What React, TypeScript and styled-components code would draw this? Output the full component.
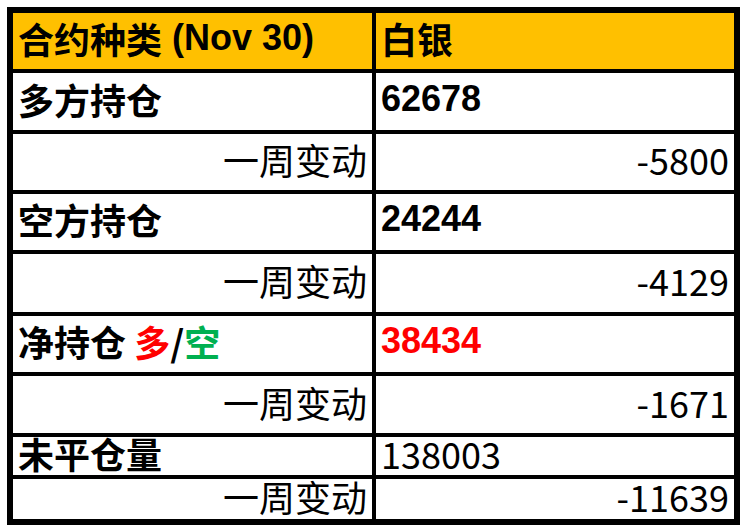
import React from "react";
import styled, { createGlobalStyle } from "styled-components";

const GlobalStyle = createGlobalStyle`
  html, body { margin: 0; padding: 0; background: #ffffff; }
  body { padding: 7px; }
`;

const Table = styled.div`
  display: grid;
  grid-template-columns: 359px 358px;
  grid-template-rows: 56px 57px 56px 56px 58px 56px 57px 38px 40px;
  gap: 4px;
  width: max-content;
  background: #000000;
  border: 6px solid #000000;
`;

const Cell = styled.div<{ $head?: boolean; $right?: boolean; $bold?: boolean; $latin?: boolean }>`
  display: flex;
  align-items: center;
  justify-content: ${(p) => (p.$right ? "flex-end" : "flex-start")};
  min-height: 0;
  background: ${(p) => (p.$head ? "#FFC000" : "#ffffff")};
  padding: 0 ${(p) => (p.$right ? "5px" : "0")} 6px ${(p) => (p.$right ? "0" : "5px")};
  font-family: ${(p) =>
    p.$latin
      ? '"Liberation Sans", Arial, "Noto Sans CJK SC", sans-serif'
      : '"Noto Sans CJK SC", "Liberation Sans", sans-serif'};
  font-weight: ${(p) => (p.$bold ? 700 : 400)};
  font-size: 36px;
  line-height: 1;
  color: #000000;
  white-space: nowrap;
`;

const Latin = styled.span`
  font-family: "Liberation Sans", Arial, sans-serif;
  font-weight: 700;
`;

const Tone = styled.span<{ $color: string }>`
  color: ${(p) => p.$color};
`;

export default function App() {
  return (
    <>
      <GlobalStyle />
      <Table>
        <Cell $head $bold>
          合约种类<Latin>&nbsp;(Nov 30)</Latin>
        </Cell>
        <Cell $head $bold>白银</Cell>

        <Cell $bold>多方持仓</Cell>
        <Cell $bold $latin>62678</Cell>
        <Cell $right>一周变动</Cell>
        <Cell $right>-5800</Cell>

        <Cell $bold>空方持仓</Cell>
        <Cell $bold $latin>24244</Cell>
        <Cell $right>一周变动</Cell>
        <Cell $right>-4129</Cell>

        <Cell $bold>
          净持仓&nbsp;<Tone $color="#FF0000">多</Tone>/<Tone $color="#00B050">空</Tone>
        </Cell>
        <Cell $bold $latin>
          <Tone $color="#FF0000">38434</Tone>
        </Cell>
        <Cell $right>一周变动</Cell>
        <Cell $right>-1671</Cell>

        <Cell $bold>未平仓量</Cell>
        <Cell>138003</Cell>
        <Cell $right>一周变动</Cell>
        <Cell $right>-11639</Cell>
      </Table>
    </>
  );
}
